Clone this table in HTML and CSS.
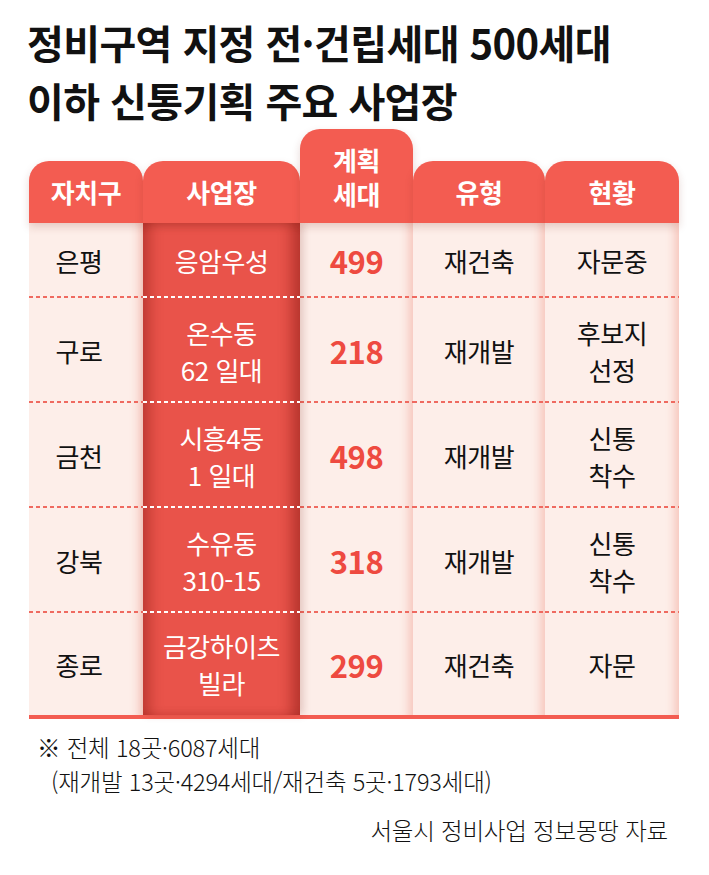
FILE: index.html
```html
<!DOCTYPE html>
<html lang="ko">
<head>
<meta charset="utf-8">
<link rel="stylesheet" href="styles.css">
</head>
<body>
<div class="page">
  <h1 class="title"><span class="tline">정비구역 지정 전·건립세대 500세대</span><span class="tline">이하 신통기획 주요 사업장</span></h1>
  <div class="table">
    <div class="col c1">
      <div class="th">자치구</div>
      <div class="body">
        <div class="cell r1">은평</div>
        <div class="cell">구로</div>
        <div class="cell">금천</div>
        <div class="cell">강북</div>
        <div class="cell last">종로</div>
      </div>
    </div>
    <div class="col c2">
      <div class="th">사업장</div>
      <div class="body">
        <div class="cell r1">응암우성</div>
        <div class="cell">온수동<br>62 일대</div>
        <div class="cell">시흥4동<br>1 일대</div>
        <div class="cell">수유동<br>310-15</div>
        <div class="cell last">금강하이츠<br>빌라</div>
      </div>
    </div>
    <div class="col c3">
      <div class="th tall">계획<br>세대</div>
      <div class="body">
        <div class="cell r1 num">499</div>
        <div class="cell num">218</div>
        <div class="cell num">498</div>
        <div class="cell num">318</div>
        <div class="cell last num">299</div>
      </div>
    </div>
    <div class="col c4">
      <div class="th">유형</div>
      <div class="body">
        <div class="cell r1">재건축</div>
        <div class="cell">재개발</div>
        <div class="cell">재개발</div>
        <div class="cell">재개발</div>
        <div class="cell last">재건축</div>
      </div>
    </div>
    <div class="col c5">
      <div class="th">현황</div>
      <div class="body">
        <div class="cell r1">자문중</div>
        <div class="cell">후보지<br>선정</div>
        <div class="cell">신통<br>착수</div>
        <div class="cell">신통<br>착수</div>
        <div class="cell last">자문</div>
      </div>
    </div>
  </div>
  <div class="baseline"></div>
  <div class="notes">
    <p class="note">※ 전체 18곳·6087세대</p>
    <p class="note indent">(재개발 13곳·4294세대/재건축 5곳·1793세대)</p>
    <p class="source">서울시 정비사업 정보몽땅 자료</p>
  </div>
</div>
</body>
</html>
```

FILE: styles.css
```css
body {
  margin: 0;
  background: #ffffff;
  font-family: "Noto Sans CJK KR", "Noto Sans", sans-serif;
  color: #111111;
}

.page {
  width: 709px;
  height: 875px;
  overflow: hidden;
}

.title {
  margin: 0;
  padding: 13px 0 0 27px;
  font-size: 40px;
  font-weight: 700;
  letter-spacing: -0.6px;
}

.tline {
  display: block;
  height: 58px;
  line-height: 58px;
}

.table {
  display: flex;
  align-items: flex-end;
  margin: 0 0 0 29px;
  width: 650px;
}

.col {
  display: flex;
  flex-direction: column;
}

.c1 { width: 114px; }
.c2 { width: 157px; }
.c3 { width: 113px; }
.c4 { width: 132px; }
.c5 { width: 134px; }

.th {
  position: relative;
  z-index: 2;
  height: 62px;
  background: #f35c51;
  color: #ffffff;
  border-radius: 20px 20px 0 0;
  display: flex;
  align-items: center;
  justify-content: center;
  text-align: center;
  font-size: 26px;
  font-weight: 700;
  line-height: 34px;
  letter-spacing: -0.5px;
  box-shadow: 0 4px 8px rgba(120, 40, 30, 0.18);
}

.th.tall {
  height: 94px;
  padding-top: 2px;
  box-sizing: border-box;
}

.body {
  background: #fdeee9;
  box-shadow: inset -12px 0 10px -8px rgba(235, 120, 100, 0.35);
}

.c2 .body {
  position: relative;
  z-index: 1;
  background: #e9534a;
  box-shadow: inset 12px 0 14px -6px rgba(110, 10, 5, 0.38),
              inset -14px 0 14px -6px rgba(110, 10, 5, 0.42),
              3px 0 8px rgba(120, 30, 20, 0.2);
}

.cell {
  height: 105px;
  display: flex;
  align-items: center;
  justify-content: center;
  text-align: center;
  font-size: 26px;
  line-height: 37px;
  letter-spacing: -0.5px;
  background-image: repeating-linear-gradient(90deg, #ef6a60 0 4px, transparent 4px 7px);
  background-size: 100% 2px;
  background-repeat: no-repeat;
  background-position: left bottom;
}

.cell.r1 {
  height: 75px;
}

.cell.last {
  height: 102px;
  background-image: none;
}

.c1 .cell {
  padding-right: 14px;
}

.c2 .cell {
  color: #ffffff;
  background-image: repeating-linear-gradient(90deg, #ffffff 0 4px, transparent 4px 7px);
}

.c2 .cell.last {
  background-image: none;
}

.num {
  color: #ee4a40;
  font-weight: 700;
  font-size: 31px;
  letter-spacing: -0.5px;
}

.baseline {
  margin-left: 29px;
  width: 650px;
  height: 4px;
  background: #f35c51;
}

.notes {
  padding: 11px 41px 0 37px;
  font-size: 23.5px;
  font-weight: 300;
  line-height: 34px;
  letter-spacing: -0.2px;
  color: #111111;
}

.note {
  margin: 0;
}

.indent {
  padding-left: 14px;
}

.source {
  margin: 15px 0 0 0;
  text-align: right;
}
```
